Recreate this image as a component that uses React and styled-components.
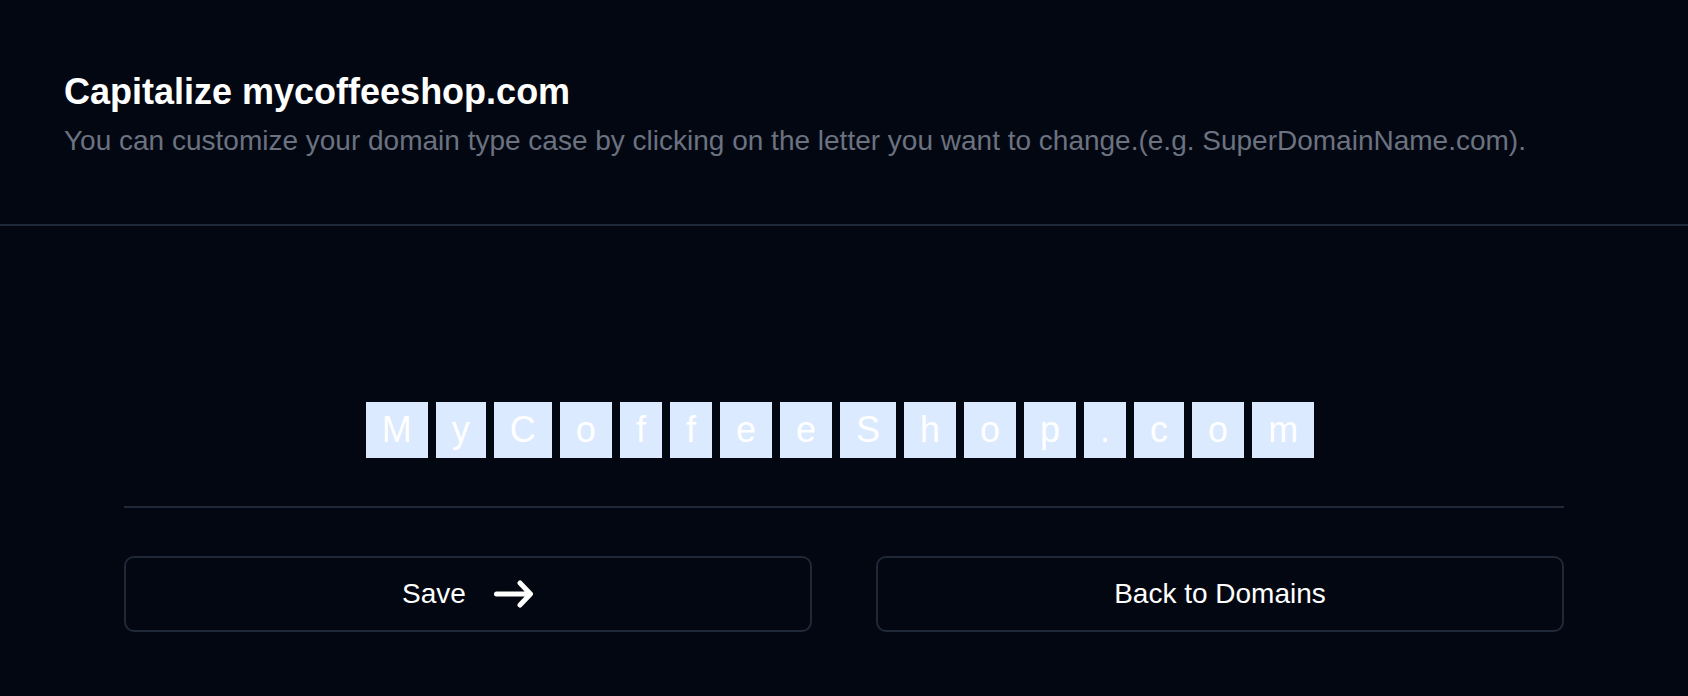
import React from "react";
import styled, { createGlobalStyle } from "styled-components";

const GlobalStyle = createGlobalStyle`
  html, body {
    margin: 0;
    padding: 0;
    background: #030712;
  }
  body {
    font-family: "Liberation Sans", Arial, sans-serif;
  }
`;

const Page = styled.div`
  min-height: 100vh;
  background: #030712;
  color: #ffffff;
`;

const Header = styled.header`
  padding: 70px 64px 63px;
  border-bottom: 2px solid #1f2937;
`;

const Title = styled.h1`
  margin: 0;
  font-size: 36px;
  line-height: 44px;
  font-weight: 700;
  color: #ffffff;
`;

const Subtitle = styled.p`
  margin: 7px 0 0;
  font-size: 28px;
  line-height: 40px;
  color: #6b7280;
`;

const Body = styled.main`
  width: 1440px;
  margin: 0 auto;
  padding-top: 176px;
`;

const LetterRow = styled.div`
  display: flex;
  justify-content: center;
  padding-bottom: 48px;
  border-bottom: 2px solid #1f2937;
`;

const Letter = styled.button`
  height: 56px;
  margin: 0 8px 0 0;
  padding: 0 16px;
  border: none;
  background: #dbeafe;
  color: #ffffff;
  font-family: inherit;
  font-size: 36px;
  line-height: 56px;
  cursor: pointer;
`;

const Actions = styled.div`
  display: grid;
  grid-template-columns: 1fr 1fr;
  gap: 64px;
  padding-top: 48px;
`;

const ActionButton = styled.button`
  display: flex;
  align-items: center;
  justify-content: center;
  gap: 28px;
  height: 76px;
  border: 2px solid #1f2937;
  border-radius: 10px;
  background: transparent;
  color: #ffffff;
  font-family: inherit;
  font-size: 28px;
  cursor: pointer;
`;

const Arrow = () => (
  <svg width="40" height="28" viewBox="0 0 40 28" fill="none">
    <path
      d="M2.5 14H36M26 3L36.5 14L26 25"
      stroke="#ffffff"
      strokeWidth="5"
      strokeLinecap="round"
      strokeLinejoin="round"
    />
  </svg>
);

const letters = "MyCoffeeShop.com".split("");

export default function App() {
  return (
    <Page>
      <GlobalStyle />
      <Header>
        <Title>Capitalize mycoffeeshop.com</Title>
        <Subtitle>
          You can customize your domain type case by clicking on the letter you
          want to change.(e.g. SuperDomainName.com).
        </Subtitle>
      </Header>
      <Body>
        <LetterRow>
          {letters.map((ch, i) => (
            <Letter key={i}>{ch}</Letter>
          ))}
        </LetterRow>
        <Actions>
          <ActionButton>
            Save
            <Arrow />
          </ActionButton>
          <ActionButton>Back to Domains</ActionButton>
        </Actions>
      </Body>
    </Page>
  );
}
